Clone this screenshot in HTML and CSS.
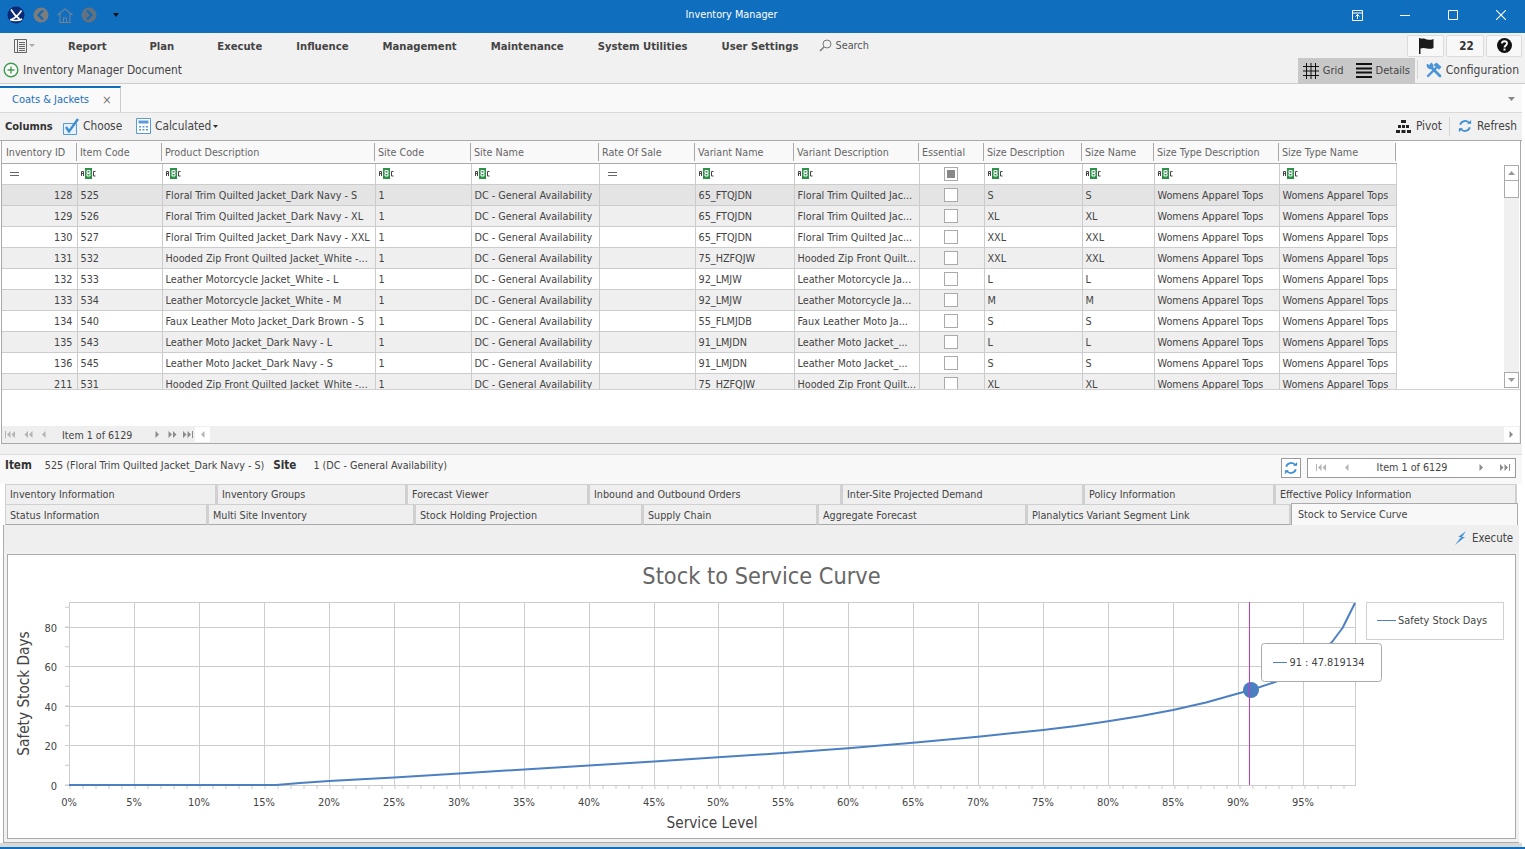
FILE: index.html
```html
<!DOCTYPE html>
<html lang="en">
<head>
<meta charset="utf-8">
<title>Inventory Manager</title>
<link rel="stylesheet" href="styles.css">
</head>
<body>
<svg class="defs" width="0" height="0" aria-hidden="true">
  <defs>
    <symbol id="abc" viewBox="0 0 15 11">
      <path d="M0.5 8V3.5h2V8M0.5 5.5h2" fill="none" stroke="#444"/>
      <rect x="4" width="7" height="11" fill="#2e9148"/>
      <path d="M6 2.500h3v2.500H6zM6 5.500h3V8H6z" fill="none" stroke="#fff"/>
      <path d="M14.500 3.500h-2V8h2" fill="none" stroke="#444"/>
    </symbol>
    <symbol id="first" viewBox="0 0 10 7"><path d="M0 0h1v7H0zM5.500 0v7L2 3.500zM10 0v7L6.500 3.500z" fill="#b4b4b4"/></symbol>
    <symbol id="pprev" viewBox="0 0 10 7"><path d="M5 0v7L1.500 3.500zM9.500 0v7L6 3.500z" fill="#b4b4b4"/></symbol>
    <symbol id="prev" viewBox="0 0 5 7"><path d="M4.500 0v7L1 3.500z" fill="#b4b4b4"/></symbol>
    <symbol id="next" viewBox="0 0 5 7"><path d="M.5 0v7L4 3.500z" fill="#8c8c8c"/></symbol>
    <symbol id="nnext" viewBox="0 0 10 7"><path d="M.5 0v7L4 3.500zM5 0v7l3.500-3.500z" fill="#8c8c8c"/></symbol>
    <symbol id="last" viewBox="0 0 10 7"><path d="M0 0v7l3.500-3.500zM4.500 0v7L8 3.500zM9 0h1v7H9z" fill="#8c8c8c"/></symbol>
    <symbol id="refresh" viewBox="0 0 16 16">
      <path d="M2.500 6.500A5.800 5.800 0 0 1 13 5M13.500 9.500A5.800 5.800 0 0 1 3 11" fill="none" stroke="#3d8fd1" stroke-width="2"/>
      <path d="M10.500 5.500h4.500V1zM5.500 10.500H1V15z" fill="#3d8fd1"/>
    </symbol>
  </defs>
</svg>

<div class="app">
  <header class="titlebar">
    <div class="tb-left">
      <svg class="tb-logo" width="18" height="18" viewBox="0 0 18 18"><circle cx="9" cy="9" r="8.500" fill="#0a2a78"/><path d="M4 3.500c2 3.500 4 6.500 8.500 9.500M14.500 4.500C12 8.500 9 11.500 4.500 13.500M3 13.500c3 1.500 9 1.500 12-.5" fill="none" stroke="#fff" stroke-width="1.600"/></svg>
      <svg width="16" height="16" viewBox="0 0 16 16"><circle cx="8" cy="8" r="7.500" fill="#7c7c7c"/><path d="M10 3.500 5.500 8l4.500 4.500" fill="none" stroke="#1569b3" stroke-width="2.200"/></svg>
      <svg width="16" height="15" viewBox="0 0 16 15"><path d="M.5 7 8 1l7.500 6M3 5.500v9h10v-9M6.500 14.500V10h3v4.500" fill="none" stroke="#6f8296" stroke-width="1.100"/></svg>
      <svg width="16" height="16" viewBox="0 0 16 16"><circle cx="8" cy="8" r="7.500" fill="#62727f"/><path d="M6 3.500 10.500 8 6 12.500" fill="none" stroke="#1569b3" stroke-width="2.200"/></svg>
      <svg class="tb-caret" width="6" height="4" viewBox="0 0 6 4"><path d="M0 0h6L3 4z" fill="#111"/></svg>
    </div>
    <div class="tb-title">Inventory Manager</div>
    <div class="tb-controls">
      <span class="win"><svg width="11" height="11" viewBox="0 0 11 11"><path d="M.5.500h10v10H.5zM.5 3h10M5.500 9V4.500M3.500 6.500l2-2 2 2" fill="none" stroke="#fff"/></svg></span>
      <span class="win"><svg width="10" height="1" viewBox="0 0 10 1"><path d="M0 .500h10" stroke="#fff"/></svg></span>
      <span class="win"><svg width="10" height="10" viewBox="0 0 10 10"><path d="M.5.500h9v9h-9z" fill="none" stroke="#fff"/></svg></span>
      <span class="win"><svg width="10" height="10" viewBox="0 0 10 10"><path d="m0 0 10 10M10 0 0 10" stroke="#fff" stroke-width="1.100"/></svg></span>
    </div>
  </header>

  <nav class="menubar">
    <svg class="menu-list" width="21" height="14" viewBox="0 0 21 14"><path d="M.5.500h12v13H.5zM3.500.500v13M5 3.500h6M5 5.500h6M5 7.500h6M5 9.500h6M5 11.500h6" fill="none" stroke="#666"/><path d="M15 5h6l-3 3z" fill="#aaa"/></svg>
    <ul class="menu-items">
      <li class="menu-item">Report</li>
      <li class="menu-item wide">Plan</li>
      <li class="menu-item">Execute</li>
      <li class="menu-item">Influence</li>
      <li class="menu-item">Management</li>
      <li class="menu-item">Maintenance</li>
      <li class="menu-item">System Utilities</li>
      <li class="menu-item">User Settings</li>
    </ul>
    <div class="search">
      <svg width="13" height="13" viewBox="0 0 13 13"><circle cx="8" cy="5" r="4" fill="none" stroke="#777"/><path d="M5 8 1 12" stroke="#777" stroke-width="1.400"/></svg>
      <span>Search</span>
    </div>
    <div class="menu-btns">
      <span class="mbtn flag"><svg width="16" height="16" viewBox="0 0 16 16"><path d="M1 0h1.500v16H1zM2.500 1C5 0 7 1 9 1.500s4 .5 6.500-.5v9c-2.500 1-4.500 1-6.500.5S5 9.500 2.500 10.500z" fill="#1c1c1c"/></svg></span>
      <span class="mbtn count">22</span>
      <span class="mbtn help"><svg width="15" height="15" viewBox="0 0 15 15"><circle cx="7.500" cy="7.500" r="7.500" fill="#111"/><path d="M5 5.500c0-3 5-3 5 0 0 2-2.500 2-2.500 4" fill="none" stroke="#fff" stroke-width="1.800"/><rect x="6.500" y="10.500" width="2" height="2" fill="#fff"/></svg></span>
    </div>
  </nav>

  <div class="docbar">
    <svg class="doc-add" width="16" height="16" viewBox="0 0 16 16"><circle cx="8" cy="8" r="6.800" fill="#fff" stroke="#3f9d4f" stroke-width="1.400"/><path d="M8 4.500v7M4.500 8h7" stroke="#3f9d4f" stroke-width="1.400"/></svg>
    <span class="doc-name">Inventory Manager Document</span>
    <div class="view-group">
      <span class="view-item">
        <svg width="16" height="16" viewBox="0 0 16 16"><path d="M3.500 0v16M8 0v16M12.500 0v16M0 3.500h16M0 8h16M0 12.500h16" stroke="#111"/></svg>
        Grid
      </span>
      <span class="view-item details">
        <svg width="16" height="15" viewBox="0 0 16 15"><path d="M0 1h16M0 5.500h16M0 9.500h16M0 14h16" stroke="#111" stroke-width="2"/></svg>
        Details
      </span>
    </div>
    <span class="config">
      <svg width="16" height="16" viewBox="0 0 16 16"><path d="M5.500 5.500 14 14" stroke="#4a94d8" stroke-width="2.800" stroke-linecap="round"/><path d="M1 1.800A3.800 3.800 0 0 0 6.500 6.500 3.800 3.800 0 0 0 5 .5L3.500 3z" fill="#4a94d8"/><path d="m2 14 8-8" stroke="#4a94d8" stroke-width="2.400" stroke-linecap="round"/><path d="M7.500 3 10.500.5l5 4.500-2.500 2.800z" fill="#4a94d8"/></svg>
      Configuration
    </span>
  </div>

  <div class="doctabs">
    <div class="doctab"><span class="doctab-name">Coats &amp; Jackets</span><span class="doctab-x">×</span></div>
    <svg class="doctabs-caret" width="7" height="4" viewBox="0 0 7 4"><path d="M0 0h7L3.500 4z" fill="#888"/></svg>
  </div>

  <div class="toolbar">
    <b class="tool-label">Columns</b>
    <span class="tool choose">
      <svg width="16" height="17" viewBox="0 0 16 17"><path d="M.5 5.500h13v11H.5z" fill="#e5f0fa" stroke="#5b9bd5"/><path d="M3 9l3 4.500L15 1" fill="none" stroke="#3d8fd1" stroke-width="2.400"/></svg>
      Choose
    </span>
    <span class="tool calc">
      <svg width="15" height="16" viewBox="0 0 15 16"><path d="M.5.500h14v15H.5z" fill="#fff" stroke="#5b9bd5"/><path d="M2.500 2.500h10v3h-10z" fill="#5b9bd5"/><path d="M3 8h2v1.500H3zM6.500 8h2v1.500h-2zM10 8h2v1.500h-2zM3 11h2v1.500H3zM6.500 11h2v1.500h-2zM10 11h2v1.500h-2z" fill="#5b9bd5"/></svg>
      Calculated
      <svg class="calc-caret" width="5" height="3" viewBox="0 0 5 3"><path d="M0 0h5L2.500 3z" fill="#333"/></svg>
    </span>
    <span class="tool pivot">
      <svg width="15" height="13" viewBox="0 0 15 13"><path d="M5 0h5v3H5zM2 5h3v3H2zM6 5h3v3H6zM10 5h3v3h-3zM0 10h4v3H0zM5.500 10h4v3h-4zM11 10h4v3h-4z" fill="#222"/></svg>
      Pivot
    </span>
    <span class="tool refresh">
      <svg width="14" height="14"><use href="#refresh"/></svg>
      Refresh
    </span>
  </div>

  <section class="grid">
    <div class="grid-view">
      <table class="gtable">
        <colgroup>
          <col class="c1"><col class="c2"><col class="c3"><col class="c4"><col class="c5"><col class="c6"><col class="c7"><col class="c8"><col class="c9"><col class="c10"><col class="c11"><col class="c12"><col class="c13">
        </colgroup>
        <thead>
          <tr class="head">
            <th>Inventory ID</th><th>Item Code</th><th>Product Description</th><th>Site Code</th><th>Site Name</th><th>Rate Of Sale</th><th>Variant Name</th><th>Variant Description</th><th>Essential</th><th>Size Description</th><th>Size Name</th><th>Size Type Description</th><th>Size Type Name</th>
          </tr>
          <tr class="filter">
            <td><span class="eq"></span></td>
            <td><svg class="abc"><use href="#abc"/></svg></td>
            <td><svg class="abc"><use href="#abc"/></svg></td>
            <td><svg class="abc"><use href="#abc"/></svg></td>
            <td><svg class="abc"><use href="#abc"/></svg></td>
            <td><span class="eq"></span></td>
            <td><svg class="abc"><use href="#abc"/></svg></td>
            <td><svg class="abc"><use href="#abc"/></svg></td>
            <td class="ctr"><span class="chk tri"></span></td>
            <td><svg class="abc"><use href="#abc"/></svg></td>
            <td><svg class="abc"><use href="#abc"/></svg></td>
            <td><svg class="abc"><use href="#abc"/></svg></td>
            <td><svg class="abc"><use href="#abc"/></svg></td>
          </tr>
        </thead>
        <tbody>
          <tr class="sel"><td class="num">128</td><td>525</td><td>Floral Trim Quilted Jacket_Dark Navy - S</td><td>1</td><td>DC - General Availability</td><td></td><td>65_FTQJDN</td><td>Floral Trim Quilted Jac...</td><td class="ctr"><span class="chk"></span></td><td>S</td><td>S</td><td>Womens Apparel Tops</td><td>Womens Apparel Tops</td></tr>
          <tr class="alt"><td class="num">129</td><td>526</td><td>Floral Trim Quilted Jacket_Dark Navy - XL</td><td>1</td><td>DC - General Availability</td><td></td><td>65_FTQJDN</td><td>Floral Trim Quilted Jac...</td><td class="ctr"><span class="chk"></span></td><td>XL</td><td>XL</td><td>Womens Apparel Tops</td><td>Womens Apparel Tops</td></tr>
          <tr><td class="num">130</td><td>527</td><td>Floral Trim Quilted Jacket_Dark Navy - XXL</td><td>1</td><td>DC - General Availability</td><td></td><td>65_FTQJDN</td><td>Floral Trim Quilted Jac...</td><td class="ctr"><span class="chk"></span></td><td>XXL</td><td>XXL</td><td>Womens Apparel Tops</td><td>Womens Apparel Tops</td></tr>
          <tr class="alt"><td class="num">131</td><td>532</td><td>Hooded Zip Front Quilted Jacket_White -...</td><td>1</td><td>DC - General Availability</td><td></td><td>75_HZFQJW</td><td>Hooded Zip Front Quilt...</td><td class="ctr"><span class="chk"></span></td><td>XXL</td><td>XXL</td><td>Womens Apparel Tops</td><td>Womens Apparel Tops</td></tr>
          <tr><td class="num">132</td><td>533</td><td>Leather Motorcycle Jacket_White - L</td><td>1</td><td>DC - General Availability</td><td></td><td>92_LMJW</td><td>Leather Motorcycle Ja...</td><td class="ctr"><span class="chk"></span></td><td>L</td><td>L</td><td>Womens Apparel Tops</td><td>Womens Apparel Tops</td></tr>
          <tr class="alt"><td class="num">133</td><td>534</td><td>Leather Motorcycle Jacket_White - M</td><td>1</td><td>DC - General Availability</td><td></td><td>92_LMJW</td><td>Leather Motorcycle Ja...</td><td class="ctr"><span class="chk"></span></td><td>M</td><td>M</td><td>Womens Apparel Tops</td><td>Womens Apparel Tops</td></tr>
          <tr><td class="num">134</td><td>540</td><td>Faux Leather Moto Jacket_Dark Brown - S</td><td>1</td><td>DC - General Availability</td><td></td><td>55_FLMJDB</td><td>Faux Leather Moto Ja...</td><td class="ctr"><span class="chk"></span></td><td>S</td><td>S</td><td>Womens Apparel Tops</td><td>Womens Apparel Tops</td></tr>
          <tr class="alt"><td class="num">135</td><td>543</td><td>Leather Moto Jacket_Dark Navy - L</td><td>1</td><td>DC - General Availability</td><td></td><td>91_LMJDN</td><td>Leather Moto Jacket_...</td><td class="ctr"><span class="chk"></span></td><td>L</td><td>L</td><td>Womens Apparel Tops</td><td>Womens Apparel Tops</td></tr>
          <tr><td class="num">136</td><td>545</td><td>Leather Moto Jacket_Dark Navy - S</td><td>1</td><td>DC - General Availability</td><td></td><td>91_LMJDN</td><td>Leather Moto Jacket_...</td><td class="ctr"><span class="chk"></span></td><td>S</td><td>S</td><td>Womens Apparel Tops</td><td>Womens Apparel Tops</td></tr>
          <tr class="alt"><td class="num">211</td><td>531</td><td>Hooded Zip Front Quilted Jacket_White -...</td><td>1</td><td>DC - General Availability</td><td></td><td>75_HZFQJW</td><td>Hooded Zip Front Quilt...</td><td class="ctr"><span class="chk"></span></td><td>XL</td><td>XL</td><td>Womens Apparel Tops</td><td>Womens Apparel Tops</td></tr>
        </tbody>
      </table>
      <div class="vscroll">
        <span class="sbtn"><svg width="7" height="4" viewBox="0 0 7 4"><path d="M0 4h7L3.500 0z" fill="#999"/></svg></span>
        <span class="sthumb"></span>
        <span class="strack"></span>
        <span class="sbtn"><svg width="7" height="4" viewBox="0 0 7 4"><path d="M0 0h7L3.500 4z" fill="#999"/></svg></span>
      </div>
    </div>
    <div class="grid-blank"></div>
    <div class="pager">
      <span class="pg-btns">
        <svg class="pg2"><use href="#first"/></svg>
        <svg class="pg2"><use href="#pprev"/></svg>
        <svg class="pg1"><use href="#prev"/></svg>
      </span>
      <span class="pg-text">Item 1 of 6129</span>
      <span class="pg-btns after">
        <svg class="pg1"><use href="#next"/></svg>
        <svg class="pg2"><use href="#nnext"/></svg>
        <svg class="pg2"><use href="#last"/></svg>
      </span>
      <span class="hs-btn"><svg class="pg1"><use href="#prev"/></svg></span>
      <span class="hs-track"></span>
      <span class="hs-btn"><svg class="pg1"><use href="#next"/></svg></span>
    </div>
  </section>

  <div class="gap"></div>

  <section class="detail">
    <div class="itembar">
      <b class="ib-label">Item</b><span class="ib-value">525 (Floral Trim Quilted Jacket_Dark Navy - S)</span>
      <b class="ib-label site">Site</b><span class="ib-value site">1 (DC - General Availability)</span>
      <span class="ib-refresh"><svg width="14" height="14"><use href="#refresh"/></svg></span>
      <div class="ib-nav">
        <svg class="pg2"><use href="#first"/></svg>
        <svg class="pg1 nav-prev"><use href="#prev"/></svg>
        <span class="nav-text">Item 1 of 6129</span>
        <svg class="pg1"><use href="#next"/></svg>
        <svg class="pg2 nav-last"><use href="#last"/></svg>
      </div>
    </div>

    <div class="tabrow one">
      <span class="t w212">Inventory Information</span>
      <span class="t w190">Inventory Groups</span>
      <span class="t w182">Forecast Viewer</span>
      <span class="t w253">Inbound and Outbound Orders</span>
      <span class="t w242">Inter-Site Projected Demand</span>
      <span class="t w191">Policy Information</span>
      <span class="t w242b">Effective Policy Information</span>
    </div>
    <div class="tabrow two">
      <span class="t w203">Status Information</span>
      <span class="t w207">Multi Site Inventory</span>
      <span class="t w228">Stock Holding Projection</span>
      <span class="t w175">Supply Chain</span>
      <span class="t w209">Aggregate Forecast</span>
      <span class="t w264">Planalytics Variant Segment Link</span>
      <span class="t active">Stock to Service Curve</span>
    </div>

    <div class="pane">
      <div class="pane-tools">
        <svg width="12" height="14" viewBox="0 0 12 14"><path d="M11 0 3 6h3L0 14l10-8H7z" fill="#4a94d8"/></svg>
        <span>Execute</span>
      </div>
      <div class="chart">
        <svg class="chart-svg" width="1507" height="283" viewBox="8 555 1507 283">
          <text class="c-title" x="761.500" y="584" text-anchor="middle">Stock to Service Curve</text>

          <path class="gridline" d="M69.500 602.500V785.500M134.500 602V785M199.500 602V785M264.500 602V785M329.500 602V785M394.500 602V785M459.500 602V785M524.500 602V785M589.500 602V785M654.500 602V785M718.500 602V785M783.500 602V785M848.500 602V785M913.500 602V785M978.500 602V785M1043.500 602V785M1108.500 602V785M1173.500 602V785M1238.500 602V785M1303.500 602V785M1355.500 602V785M69 602.500H1356M69 627.500H1356M69 666.500H1356M69 706.500H1356M69 745.500H1356M65 785.500H1356M65 627.500H69M65 666.500H69M65 706.500H69M65 745.500H69"/>
          <path class="ticks-x" d="M69.500 787.500H1356"/>
          <path class="ticks-y" d="M67 785.500V602"/>

          <g class="c-ylab">
            <text x="57" y="632" text-anchor="end">80</text>
            <text x="57" y="671" text-anchor="end">60</text>
            <text x="57" y="711" text-anchor="end">40</text>
            <text x="57" y="750" text-anchor="end">20</text>
            <text x="57" y="790" text-anchor="end">0</text>
          </g>
          <g class="c-xlab" text-anchor="middle">
            <text x="69" y="806">0%</text><text x="134" y="806">5%</text><text x="199" y="806">10%</text><text x="264" y="806">15%</text><text x="329" y="806">20%</text><text x="394" y="806">25%</text><text x="459" y="806">30%</text><text x="524" y="806">35%</text><text x="589" y="806">40%</text><text x="654" y="806">45%</text><text x="718" y="806">50%</text><text x="783" y="806">55%</text><text x="848" y="806">60%</text><text x="913" y="806">65%</text><text x="978" y="806">70%</text><text x="1043" y="806">75%</text><text x="1108" y="806">80%</text><text x="1173" y="806">85%</text><text x="1238" y="806">90%</text><text x="1303" y="806">95%</text>
          </g>
          <text class="c-axis" transform="translate(29 693.500) rotate(-90)" text-anchor="middle">Safety Stock Days</text>
          <text class="c-axis" x="712" y="828" text-anchor="middle">Service Level</text>

          <path class="curve" d="M69 785H276L300 783 329 781 394 777.500 459 773.500 524 769.500 589 765.500 654 761.500 718 757.300 783 753 848 748.300 913 742.700 978 736.700 1043 730 1076 726 1108 721.300 1141 716 1173 710 1206 702.500 1238 693.500 1251 690 1275 682 1300 671 1332 642 1342.500 628 1355 603"/>
          <circle class="marker" cx="1251" cy="690" r="8"/>
          <path class="crosshair" d="M1249.500 602V785"/>

          <rect class="box" x="1366.500" y="602.500" width="137" height="37"/>
          <path class="legend-line" d="M1377 620.500H1396"/>
          <text class="c-leg" x="1398" y="624">Safety Stock Days</text>

          <rect class="tip" x="1261.500" y="643.500" width="120" height="38" rx="3"/>
          <path class="legend-line" d="M1273 662.500H1287"/>
          <text class="c-leg" x="1289.500" y="666">91 : 47.819134</text>
        </svg>
      </div>
    </div>
  </section>
</div>
</body>
</html>
```

FILE: styles.css
```css
* { box-sizing: border-box; }
html, body { margin: 0; padding: 0; }
body {
  width: 1525px;
  height: 849px;
  overflow: hidden;
  font-family: "DejaVu Sans Condensed", "DejaVu Sans", sans-serif;
  font-stretch: condensed;
  font-size: 10.8px;
  color: #444;
  background: #fff;
}
svg { display: block; flex: none; }
b { font-weight: bold; }
.defs { position: absolute; }
.app { height: 849px; display: flex; flex-direction: column; border-bottom: 2px solid #106ebe; }

/* title bar */
.titlebar { height: 33px; flex: none; background: #106ebe; display: flex; align-items: center; position: relative; color: #fff; padding-bottom: 3px; }
.tb-left { display: flex; align-items: center; padding-left: 7px; gap: 8px; width: 300px; }
.tb-caret { margin-left: 8px; }
.tb-title { position: absolute; left: 0; top: 0; width: 1463px; line-height: 30px; text-align: center; font-size: 10.8px; }
.tb-controls { margin-left: auto; display: flex; }
.win { width: 48px; height: 30px; display: flex; align-items: center; justify-content: center; }

/* menu */
.menubar { height: 25px; flex: none; display: flex; align-items: center; padding-left: 14px; background: #f1f1f1; }
.menu-items { display: flex; list-style: none; margin: 0; padding: 1px 0 0 16px; }
.menu-item { font-weight: bold; font-size: 11.2px; padding: 0 17px; color: #444; }
.menu-item.wide { padding: 0 26px; }
.search { display: flex; align-items: center; gap: 3px; margin-left: 4px; color: #555; }
.menu-btns { margin-left: auto; display: flex; gap: 2px; padding-right: 3px; }
.mbtn { height: 22px; background: #f8f8f8; border: 1px solid #dcdcdc; border-radius: 2px; display: flex; align-items: center; justify-content: center; font-weight: bold; font-size: 11.5px; color: #333; }
.mbtn.flag { width: 37px; }
.mbtn.count { width: 38px; padding-left: 3px; }
.mbtn.help { width: 36px; }

.docbar { height: 26px; flex: none; display: flex; align-items: center; border-bottom: 1px solid #ccc; padding: 0 0 2px 3px; background: #f1f1f1; }
.doc-name { font-size: 11.8px; margin-left: 4px; }
.view-group { margin-left: auto; height: 26px; width: 117px; margin-bottom: -3px; margin-top: -1px; background: #c8c8c8; display: flex; align-items: center; padding-left: 5px; }
.view-item { display: flex; align-items: center; gap: 4px; font-size: 11px; }
.view-item.details { margin-left: 12px; }
.config { display: flex; align-items: center; gap: 4px; font-size: 12px; margin-left: 2px; padding: 0 6px 0 8px; height: 19px; border-left: 1px solid #d5d5d5; }

/* document tabs */
.doctabs { height: 29px; flex: none; background: #f9f9f9; border-bottom: 1px solid #d9d9d9; display: flex; align-items: flex-start; margin-right: 3px; }
.doctab { width: 121px; height: 26px; margin-top: 2px; background: #fafafa; border-top: 2px solid #106ebe; border-right: 1px solid #ccc; display: flex; align-items: center; padding: 0 0 1px 12px; color: #1a6fc0; }
.doctab-name { width: 90px; font-size: 11px; }
.doctab-x { font-size: 13px; color: #777; }
.doctabs-caret { margin: 13px 7px 0 auto; }

.toolbar { height: 28px; flex: none; display: flex; align-items: center; padding: 0 5px 1px; margin-right: 3px; border-bottom: 1px solid #aaa; background: #f1f1f1; }
.tool-label { font-size: 11px; width: 58px; color: #333; }
.tool { display: flex; align-items: center; gap: 5px; font-size: 11.8px; }
.choose { width: 73px; gap: 4px; }
.calc { gap: 4px; }
.calc-caret { margin-left: -2px; }
.pivot { margin-left: auto; padding-right: 7px; }
.refresh { border-left: 1px solid #d5d5d5; padding-left: 8px; height: 19px; }

/* grid */
.grid { height: 303px; flex: none; margin: 0 4px 0 1px; border: solid #aaa; border-width: 0 1px 1px; background: #fff; display: flex; flex-direction: column; }
.grid-view { height: 249px; flex: none; overflow: hidden; position: relative; border-bottom: 1px solid #d0d0d0; }
.gtable { table-layout: fixed; width: 1394px; border-collapse: collapse; }
.c1 { width: 75px; } .c2 { width: 85px; } .c3 { width: 213px; } .c4 { width: 96px; }
.c5 { width: 128px; } .c6 { width: 96px; } .c7 { width: 99px; } .c8 { width: 125px; }
.c9 { width: 65px; } .c10 { width: 98px; } .c11 { width: 72px; } .c12 { width: 125px; } .c13 { width: 117px; }
.gtable th, .gtable td { padding: 0 3px 0 3px; white-space: nowrap; overflow: hidden; text-align: left; font-weight: normal; }
.gtable .head th { height: 22px; padding-top: 1px; background: #f9f9f9 linear-gradient(#aaa, #aaa) right 2px no-repeat; background-size: 1px 18px; color: #666; font-size: 10.7px; border-bottom: 1px solid #aaa; }
.gtable .head th:first-child { padding-left: 4px; }
.filter td { height: 21px; background: #fff; border-right: 1px solid #ccc; border-bottom: 1px solid #ccc; }
tbody td { height: 21px; font-size: 10.75px; border-right: 1px solid #ccc; border-bottom: 1px solid #ccc; background: #fff; color: #444; }
.gtable tbody td { padding-top: 2px; }
tbody .alt td { background: #efefef; }
tbody .sel td { background: #e4e4e4; }
.gtable .num { text-align: right; padding-right: 4px; }
.gtable .ctr { text-align: center; padding: 0 2px 0 0; }
.abc { width: 15px; height: 11px; }
.eq { display: block; width: 9px; height: 4px; margin-left: 5px; border: solid #666; border-width: 1px 0; }
.chk { display: inline-block; vertical-align: middle; width: 14px; height: 14px; background: #fff; border: 1px solid #aaa; }
.chk.tri { box-shadow: inset 0 0 0 2px #fff, inset 0 0 0 8px #888; }
.vscroll { position: absolute; right: 1px; top: 24px; width: 15px; height: 223px; display: flex; flex-direction: column; background: #f0f0f0; }
.sbtn { height: 16px; flex: none; background: #fff; border: 1px solid #aaa; display: flex; align-items: center; justify-content: center; }
.sthumb { height: 17px; flex: none; background: #fff; border: 1px solid #aaa; border-top: 0; }
.strack { flex: 1; }
.grid-blank { height: 36px; flex: none; }
.pager { height: 17px; flex: none; background: #efefef; display: flex; align-items: center; padding: 0 1px 0 3px; }
.pg-btns { display: flex; align-items: center; gap: 8px; width: 57px; flex: none; }
.pg-btns.after { width: 40px; gap: 8px; }
.pg-btns.after .pg2:last-child { margin-left: -3px; }
.pg-text { width: 93px; flex: none; padding-top: 1px; font-size: 10.6px; }
.pg1 { width: 5px; height: 7px; }
.pg2 { width: 10px; height: 7px; }
.hs-btn { width: 15px; height: 15px; background: #fff; display: flex; align-items: center; justify-content: center; flex: none; }
.hs-track { flex: 1; }
.gap { height: 10px; flex: none; background: #f1f1f1; margin-right: 3px; }

/* detail */
.detail { flex: 1; display: flex; flex-direction: column; min-height: 0; margin-right: 3px; border-bottom: 4px solid #d8d8d8; }
.itembar { height: 30px; flex: none; background: #f8f8f8; border-top: 1px solid #ddd; display: flex; align-items: center; padding: 0 6px 9px 5px; font-size: 10.7px; }
.ib-label { font-size: 11.6px; color: #333; }
.ib-value { margin-left: 13px; }
.ib-label.site { margin-left: 9px; }
.ib-value.site { margin-left: 17px; }
.ib-refresh { margin: 5px 0 0 auto; width: 20px; height: 20px; background: #fff; border: 1px solid #999; display: flex; align-items: center; justify-content: center; flex: none; }
.ib-nav { width: 209px; height: 20px; margin: 5px 0 0 6px; background: #fff; border: 1px solid #999; display: flex; align-items: center; padding: 0 0 0 8px; flex: none; }
.nav-prev { margin-left: 18px; }
.nav-text { width: 130px; flex: none; text-align: center; padding-right: 4px; }
.nav-last { margin-left: 16px; }
.tabrow { display: flex; flex: none; padding-left: 5px; color: #444; }
.tabrow.one { height: 21px; }
.tabrow.two { height: 20px; }
.t { background: #efefef; border: solid #d0d0d0; border-width: 1px 2px 1px 1px; padding: 0 0 1px 4px; display: flex; align-items: center; font-size: 10.7px; }
.tabrow.two .t { border-width: 0 2px 1px 1px; border-bottom-color: #aaa; padding: 1px 0 0 4px; }
.w212 { width: 212px; } .w190 { width: 190px; } .w182 { width: 182px; } .w253 { width: 253px; } .w242 { width: 242px; } .w191 { width: 191px; } .w242b { width: 242px; }
.w203 { width: 203px; } .w207 { width: 207px; } .w228 { width: 228px; } .w175 { width: 175px; } .w209 { width: 209px; } .w264 { width: 264px; }
.tabrow.two .t.active { width: 227px; height: 22px; margin-top: -2px; background: #f8f8f8; border: 1px solid #aaa; border-bottom: 0; padding: 0 0 0 6px; position: relative; }
.pane { flex: 1; margin: 0 3px 0 3px; border-left: 1px solid #aaa; border-bottom: 1px solid #aaa; display: flex; flex-direction: column; min-height: 0; background: #f1f1f1; }
.pane-tools { height: 26px; flex: none; background: #efefef; display: flex; align-items: center; justify-content: flex-end; gap: 5px; padding-right: 6px; font-size: 11.4px; }
.chart { height: 285px; flex: none; margin: 3px 0 0 3px; width: 1509px; border: 1px solid #aaa; background: #fff; }

/* chart */
.c-title { font-size: 23.300px; fill: #666; }
.gridline { stroke: #cdcdcd; fill: none; }
.ticks-x { stroke: #ccc; stroke-width: 3; stroke-dasharray: 1 12; fill: none; }
.ticks-y { stroke: #ccc; stroke-width: 4; stroke-dasharray: 1 18.750; fill: none; }
.c-ylab text, .c-xlab text { font-size: 11px; fill: #444; }
.c-axis { font-size: 15.200px; fill: #444; }
.c-leg { font-size: 10.900px; fill: #444; }
.curve { stroke: #4c80c2; stroke-width: 2; fill: none; stroke-linejoin: round; }
.marker { fill: #4a7fc1; }
.crosshair { stroke: #c23cc2; fill: none; }
.box { fill: #fff; stroke: #d0d0d0; }
.tip { fill: #fff; stroke: #aaa; }
.legend-line { stroke: #4c80c2; fill: none; }
```
